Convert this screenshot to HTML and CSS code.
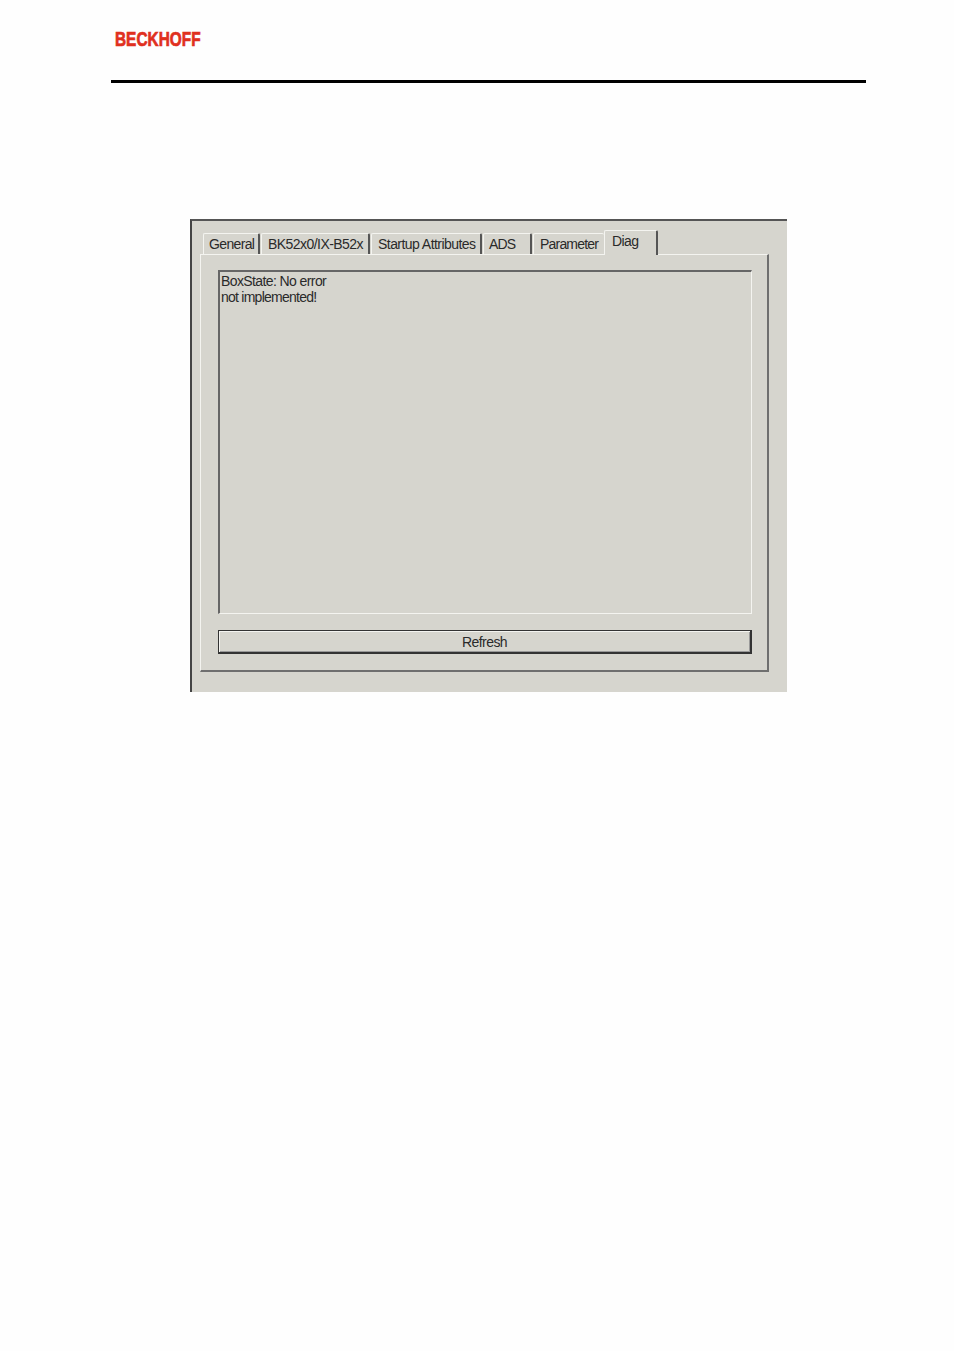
FILE: index.html
```html
<!DOCTYPE html>
<html lang="en">
<head>
  <meta charset="UTF-8" />
  <title>Diag</title>
  <link rel="stylesheet" href="styles.css">
</head>
<body>
<div class="page">
  <div class="header">
    <div class="logo">BECKHOFF</div>
  </div>
  <div class="dialog">
    <div class="tabs">
      <div class="tab tab-general">General</div>
      <div class="tab tab-bk">BK52x0/IX-B52x</div>
      <div class="tab tab-startup">Startup Attributes</div>
      <div class="tab tab-ads">ADS</div>
      <div class="tab tab-param">Parameter</div>
      <div class="tab tab-diag active">Diag</div>
    </div>
    <div class="panel">
      <div class="output">
        <div>BoxState: No error</div>
        <div class="tight">not implemented!</div>
      </div>
      <div class="button">Refresh</div>
    </div>
  </div>
</div>
</body>
</html>
```

FILE: styles.css
```css
* { box-sizing: border-box; margin: 0; padding: 0; }
html, body { height: 100%; }
body {
  font-family: "Liberation Sans", Arial, sans-serif;
  background: #fefefe;
  color: #2a2a2a;
}

.page {
  padding-top: 29px;
}

.header {
  margin-left: 111px;
  width: 755px;
  height: 54px;
  border-bottom: 3px solid #000;
}

.logo {
  margin-left: 4px;
  width: 86px;
  font-size: 20px;
  line-height: 21px;
  font-weight: bold;
  color: #e0301e;
  white-space: nowrap;
  -webkit-text-stroke: 0.7px #e0301e;
  transform: scaleX(0.77);
  transform-origin: left center;
}

.dialog {
  margin: 136px 0 0 190px;
  width: 597px;
  height: 473px;
  padding: 10px 18px 0 8px;
  background: #d6d5ce;
  border-top: 2px solid #555;
  border-left: 2px solid #444;
}

.tabs {
  display: flex;
  align-items: flex-end;
  height: 23px;
  padding-left: 3px;
  font-size: 14px;
  letter-spacing: -0.55px;
}

.tab {
  height: 21px;
  padding: 2px 0 0 6px;
  margin-right: 1px;
  border-top: 1px solid #f4f4f0;
  border-left: 1px solid #f4f4f0;
  border-right: 2px solid #555;
  border-radius: 2px 2px 0 0;
  white-space: nowrap;
}

.tab-general { width: 57px; padding-left: 5px; letter-spacing: -0.65px; }
.tab-bk { width: 109px; }
.tab-startup { width: 111px; }
.tab-ads { width: 49px; padding-left: 5px; letter-spacing: -0.8px; }
.tab-param { width: 71px; margin-right: 0; border-right: none; letter-spacing: -0.8px; }

.tab.active {
  width: 54px;
  height: 25px;
  padding: 2px 0 0 7px;
  margin-right: 0;
  margin-bottom: -1px;
  position: relative;
  background: #d6d5ce;
}

.panel {
  height: 418px;
  padding: 15px 15px 0 17px;
  border-top: 1px solid #f4f4f0;
  border-left: 1px solid #f4f4f0;
  border-right: 2px solid #6f6f6f;
  border-bottom: 2px solid #6f6f6f;
}

.output {
  height: 344px;
  padding: 1px 0 0 1px;
  font-size: 14px;
  line-height: 16px;
  letter-spacing: -0.6px;
  border-top: 2px solid #666;
  border-left: 2px solid #666;
  border-right: 1px solid #f4f4f0;
  border-bottom: 1px solid #f4f4f0;
}

.tight {
  letter-spacing: -0.75px;
}

.button {
  margin-top: 16px;
  height: 24px;
  font-size: 14px;
  line-height: 23px;
  letter-spacing: -0.55px;
  text-align: center;
  background: #d6d5ce;
  border: 1px solid #333;
  border-right-width: 2px;
  border-bottom-width: 2px;
  box-shadow: inset 1px 1px 0 #f4f4f0, inset -1px -1px 0 #999;
}
```
